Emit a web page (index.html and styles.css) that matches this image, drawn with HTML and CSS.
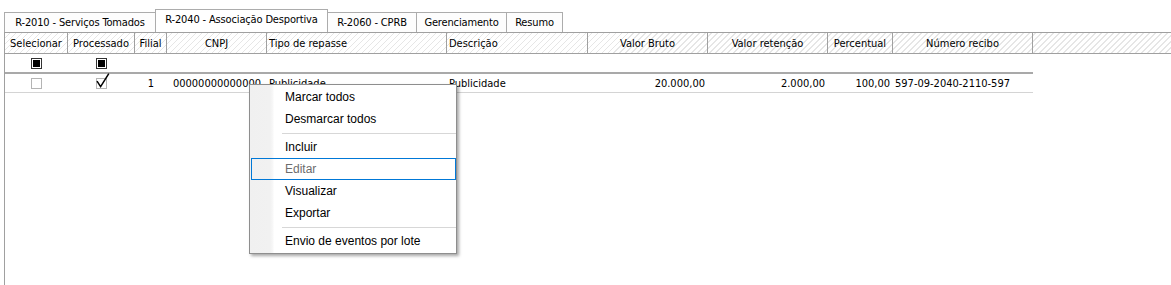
FILE: index.html
```html
<!DOCTYPE html>
<html lang="pt-BR">
<head>
<meta charset="utf-8">
<title>R-2040 - Associação Desportiva</title>
<link rel="stylesheet" href="styles.css">
</head>
<body>
<div class="app">
  <div class="tabs">
    <div class="tab t-2010">R-2010 - Serviços Tomados</div>
    <div class="tab t-2040 active">R-2040 - Associação Desportiva</div>
    <div class="tab t-2060">R-2060 - CPRB</div>
    <div class="tab t-ger">Gerenciamento</div>
    <div class="tab t-res">Resumo</div>
  </div>
  <div class="grid">
    <div class="row head">
      <div class="hc">Selecionar</div>
      <div class="hc">Processado</div>
      <div class="hc">Filial</div>
      <div class="hc">CNPJ</div>
      <div class="hc left">Tipo de repasse</div>
      <div class="hc left">Descrição</div>
      <div class="hc">Valor Bruto</div>
      <div class="hc">Valor retenção</div>
      <div class="hc">Percentual</div>
      <div class="hc">Número recibo</div>
      <div class="hc fill"></div>
    </div>
    <div class="row body filter">
      <div class="c center"><span class="tri"></span></div>
      <div class="c center"><span class="tri"></span></div>
      <div class="c"></div>
      <div class="c"></div>
      <div class="c"></div>
      <div class="c"></div>
      <div class="c"></div>
      <div class="c"></div>
      <div class="c"></div>
      <div class="c"></div>
    </div>
    <div class="row body data">
      <div class="c center">
        <svg class="cb" width="11" height="11" viewBox="0 0 11 11"><rect x="0.5" y="0.5" width="10" height="10" fill="#fff" stroke="#b4b4b4"/></svg>
      </div>
      <div class="c center">
        <svg class="cb" width="11" height="11" viewBox="0 0 11 11" overflow="visible"><rect x="0.5" y="0.5" width="10" height="10" fill="#fff" stroke="#b4b4b4"/><path d="M1 3.2 L4.6 8.6 L12.8 -4.4" fill="none" stroke="#000" stroke-width="1.5" stroke-linejoin="miter"/></svg>
      </div>
      <div class="c center">1</div>
      <div class="c center">00000000000000</div>
      <div class="c">Publicidade</div>
      <div class="c">Publicidade</div>
      <div class="c right">20.000,00</div>
      <div class="c right">2.000,00</div>
      <div class="c right">100,00</div>
      <div class="c">597-09-2040-2110-597</div>
    </div>
  </div>

  <div class="menu">
    <div class="item">Marcar todos</div>
    <div class="item">Desmarcar todos</div>
    <div class="sep"></div>
    <div class="item">Incluir</div>
    <div class="item disabled focused">Editar</div>
    <div class="item">Visualizar</div>
    <div class="item">Exportar</div>
    <div class="sep"></div>
    <div class="item">Envio de eventos por lote</div>
  </div>
</div>
</body>
</html>
```

FILE: styles.css
```css
* {
  box-sizing: border-box;
}

body {
  margin: 0;
  background: #fff;
  color: #000;
  font-family: "DejaVu Sans Condensed", "Liberation Sans", sans-serif;
  font-size: 11px;
}

.app {
  position: relative;
  width: 1171px;
  height: 285px;
  overflow: hidden;
}

/* ---------- tabs ---------- */
.tabs {
  display: flex;
  align-items: flex-end;
  height: 32px;
  padding-left: 4px;
}

.tab {
  height: 20px;
  margin-right: -1px;
  border: 1px solid #acacac;
  border-bottom: none;
  background: #fdfdfd;
  display: flex;
  align-items: center;
  justify-content: center;
  white-space: nowrap;
  overflow: hidden;
  letter-spacing: -0.15px;
}

.t-2010 { width: 152px; }
.t-2040 { width: 173px; }
.t-2060 { width: 90px; }
.t-ger { width: 91px; }
.t-res { width: 57px; }

.tab.active {
  height: 23px;
  padding-bottom: 3px;
  background: #fff;
  position: relative;
  z-index: 1;
}

/* ---------- grid ---------- */
.grid {
  --cols: 63px 67px 32px 100px 180px 141px 120px 120px 65px 140px;
  margin-left: 4px;
  height: 253px;
  border-left: 1px solid #a0a0a0;
}

.row {
  display: grid;
  grid-template-columns: var(--cols);
}

.head {
  grid-template-columns: var(--cols) 1fr;
  height: 22px;
  border-top: 1px solid #a0a0a0;
  border-bottom: 1px solid #a0a0a0;
  background-color: #fff;
  background-image: repeating-linear-gradient(135deg, #fff 0, #fff 3.1px, #e6e6e6 3.1px, #e6e6e6 4.24px);
}

.hc {
  display: flex;
  align-items: center;
  justify-content: center;
  padding: 0 2px;
  border-right: 1px solid #a0a0a0;
  white-space: nowrap;
  overflow: hidden;
}

.hc.left {
  justify-content: flex-start;
}

.hc.fill {
  border-right: none;
}

.body {
  width: 1028px;
}

.filter {
  height: 20px;
  border-bottom: 2px solid #a9a9a9;
}

.data {
  height: 19px;
  border-bottom: 1px solid #d4d4d4;
}

.c {
  display: flex;
  align-items: center;
  padding: 0 2px;
  white-space: nowrap;
}

.c.center {
  justify-content: center;
}

.c.right {
  justify-content: flex-end;
  padding-right: 3px;
}

.tri {
  width: 11px;
  height: 11px;
  border: 1px solid #333;
  padding: 1px;
  background: #fff;
}

.tri::after {
  content: "";
  display: block;
  width: 7px;
  height: 7px;
  background: #000;
}

.cb {
  display: block;
}

/* ---------- context menu ---------- */
.menu {
  position: absolute;
  left: 249px;
  top: 84px;
  width: 208px;
  height: 170px;
  padding: 1px 0;
  border: 1px solid #8e8e8e;
  background: linear-gradient(to right, #f0f0f0 0, #f1f1f1 20px, #f8f8f8 23px, #fff 24px);
  box-shadow: 2px 2px 3px rgba(0, 0, 0, 0.35);
  font-family: "Liberation Sans", sans-serif;
  font-size: 12px;
  z-index: 5;
}

.item {
  height: 22px;
  line-height: 22px;
  padding-left: 35px;
  white-space: nowrap;
}

.item.disabled {
  color: #6d6d6d;
}

.item.focused {
  margin-left: 1px;
  padding-left: 33px;
  line-height: 20px;
  border: 1px solid #0078d7;
}

.sep {
  height: 6px;
  margin-left: 32px;
  padding-top: 3px;
}

.sep::before {
  content: "";
  display: block;
  height: 1px;
  background: #d7d7d7;
}
```
